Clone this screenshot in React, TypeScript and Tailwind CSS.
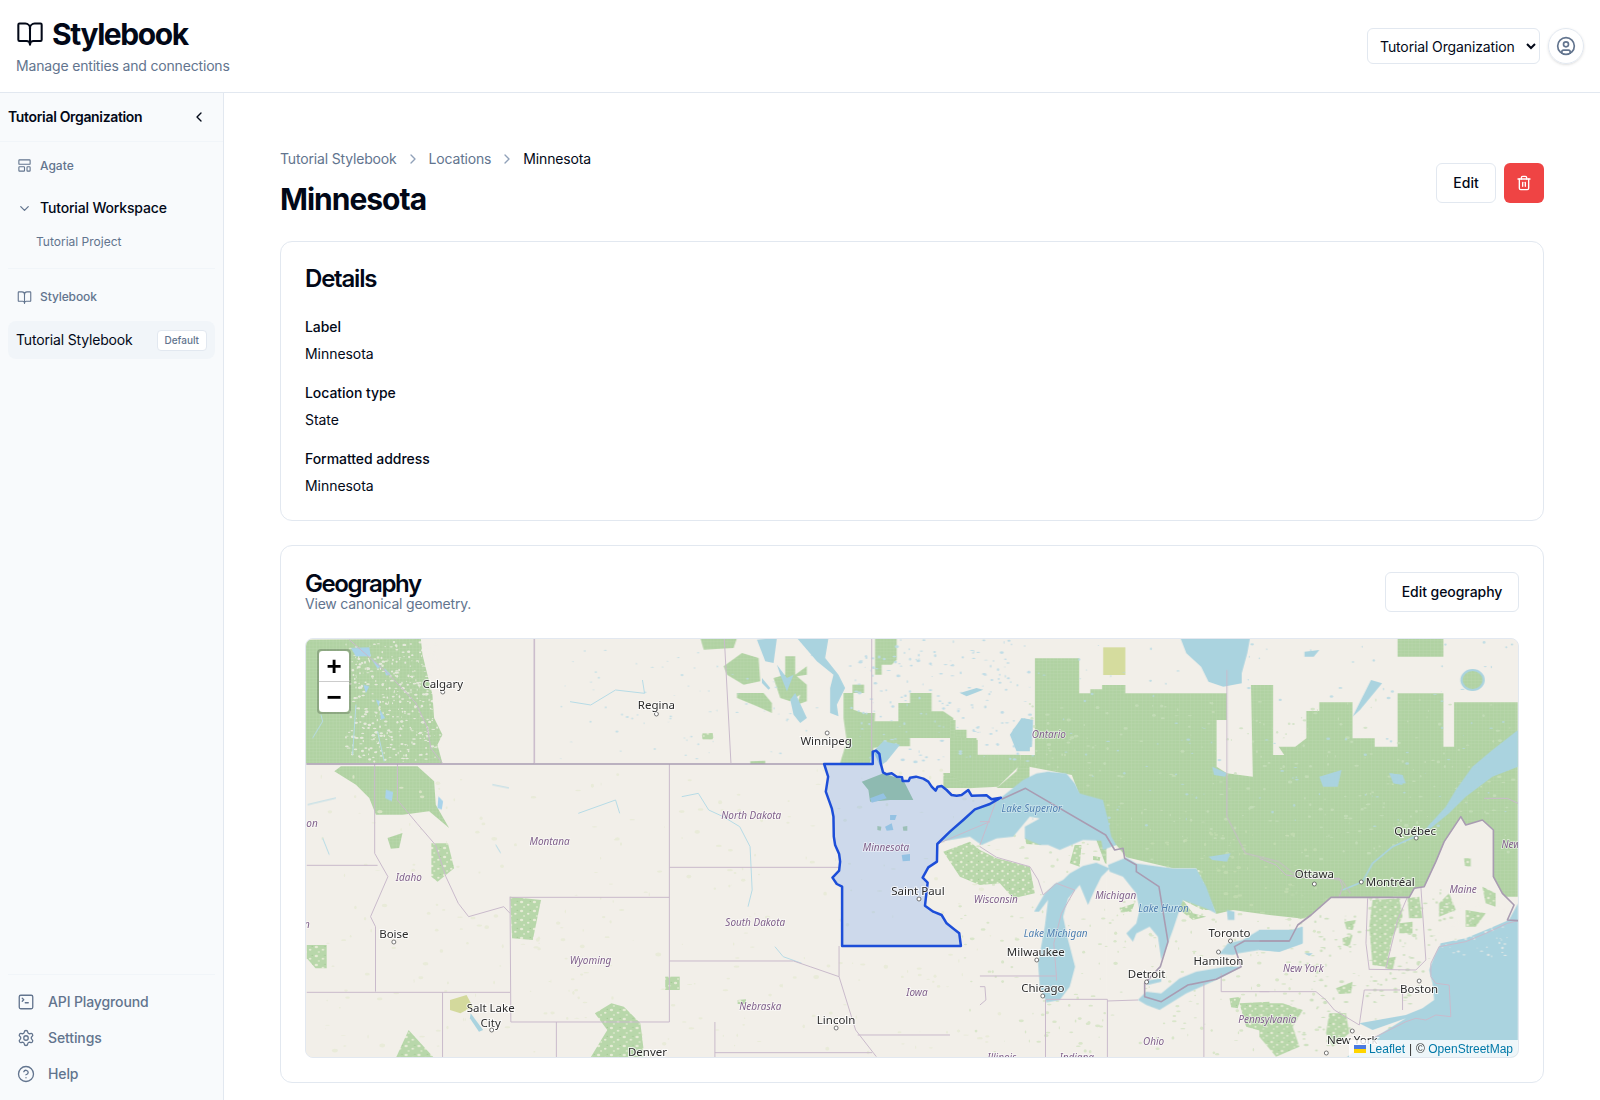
import {
  BookOpen,
  ChevronDown,
  ChevronLeft,
  ChevronRight,
  CircleHelp,
  CircleUser,
  LayoutTemplate,
  Settings,
  SquareTerminal,
  Trash2,
} from 'lucide-react'

const LAND = '#f2efe9'
const FOREST = 'url(#forest)'
const MOTTLE = 'url(#mottle)'
const WATER = '#aad3df'
const BORDER = '#c9bacb'
const STRONG = '#a99cb2'

// everything below is traced from crops of the map, so each list has its own origin

// rockies crop, origin 305,638, 3x
const rockiesForest = [
  '0,5 345,3 350,50 380,170 385,240 410,290 395,320 410,376 0,376',
  '85,400 105,385 335,385 385,430 390,500 430,570 370,520 290,530 210,530 190,480 150,440',
  '245,600 290,585 280,630 255,632',
]
const rockiesWater = [
  '135,30 190,28 195,55 150,55',
  '195,60 225,85 215,92',
  '235,90 255,110 240,112',
  '172,140 190,145 180,165',
  '210,185 222,190 218,205',
  '222,215 238,240 225,245',
  '240,455 262,462 258,490 238,480',
  '398,475 412,490 408,515 395,510',
]
const rockiesRivers = [
  '20,300 50,250 45,230',
  '140,350 150,200',
  '215,280 235,370',
  '5,500 90,480',
  '70,650 50,600',
  '560,440 610,450',
  '570,620 585,645',
]

// manitoba crop, origin 700,638, 3x
const manitobaForest = [
  '70,85 125,45 175,60 180,130 130,140 80,110',
  '110,165 190,165 215,195 215,225 170,205 110,180',
  '220,120 255,110 255,55 285,55 285,110 320,85 320,110 290,115 320,140 320,190 290,200 300,170 270,190 240,180',
  '0,0 110,0 100,30 10,35',
  '525,0 590,0 590,65 575,80 545,80 545,110 525,110',
  '457,140 492,140 492,165 457,165',
  '430,165 460,165 460,215 490,225 525,225 520,340 510,375 420,375 440,310 430,240',
  '515,250 595,250 595,195 630,195 630,165 695,165 695,220 730,220 760,240 760,275 800,275 800,300 830,300 830,350 960,350 960,380 830,380 800,330 765,330 765,300 630,300 630,325 570,325 515,330',
  '730,405 805,405 805,450 730,450',
  '960,365 990,365 990,450 890,450 950,400',
  '5,290 35,285 38,300 8,302',
  '150,370 195,368 195,378 150,378',
]
const manitobaWater = [
  '170,5 230,0 220,75 195,70',
  '290,0 385,0 375,60 415,110 435,150 410,200 415,235 390,225 390,150 400,110 350,70',
  '270,185 285,165 320,240 300,255 280,230',
  '185,120 210,150 205,155 185,135',
  '230,80 260,120 280,110 260,160 240,110',
  '520,340 550,310 600,320 560,370 540,385',
  '930,290 965,240 990,245 990,340 950,340',
  '780,165 830,150 850,155 800,175',
]

// north shore crop, stretched, origin 950,630
const northForest = [
  '230,85 350,85 350,190 380,190 380,178 412,178 412,165 475,165 475,190 750,190 750,270 722,270 722,410 750,430 820,440 815,165 875,165 875,375 905,375 890,350 935,350 965,325 965,243 1000,243 1000,217 1090,217 1090,325 1150,325 1150,350 1212,350 1212,190 1336,190 1336,350 1365,350 1365,217 1537,217 1537,800 1200,800 900,880 700,850 420,700 330,435 190,405 190,375 230,375',
  '1212,27 1336,27 1336,80 1212,80',
]
const northWater = [
  '625,27 812,27 805,70 790,130 790,160 740,170 700,155 680,110 640,70',
  '170,300 200,265 225,270 222,350 190,360',
  '1090,260 1140,150 1170,160 1110,240',
  '1190,430 1225,435 1225,465 1200,460',
  '710,410 750,430 745,440 715,435',
  '1000,440 1060,420 1050,470 1010,470',
  '960,65 1000,60 985,80 960,80',
  '700,680 760,670 750,695 710,690',
]

// great lakes crop, origin 980,770, 3x
const lakesLand = ['410,225 440,262 580,295 650,295 710,432 760,420 870,435 960,445 975,470 975,870 380,870 380,230']
const lakesForest = [
  '-110,245 -30,215 0,240 50,265 150,290 165,370 100,385 60,340 0,345 -60,320',
  '285,225 305,225 300,290 270,280',
  '135,205 175,200 185,225 140,222',
  '340,258 362,262 360,272 340,270',
  '420,415 465,400 455,425 425,425',
  '780,700 870,695 870,790 800,770',
  '750,685 785,680 775,715 755,712',
  '595,370 640,430 680,440 640,450 600,420',
  '440,290 660,300 700,420 670,420 610,390 570,330',
]
const lakesWater = [
  '63,83 130,30 170,10 205,5 260,10 285,40 300,70 370,90 385,150 395,200 410,225 370,240 365,212 310,210 240,240 205,225 180,225 135,205 135,170 180,145 150,140 100,200 50,205 5,225 -30,200 -120,215 -128,222 -90,185 -50,150 -15,118 30,102',
  '390,295 350,278 310,288 270,310 250,330 225,342 195,370 163,425 178,425 205,390 195,470 175,580 180,650 200,697 240,690 270,650 286,590 265,510 250,440 265,385 300,345 325,405 345,360 365,320',
  '385,285 440,262 470,280 580,295 650,295 680,350 710,430 680,415 610,390 600,420 580,480 565,520 545,570 535,500 510,470 470,490 460,515 440,490 470,460 480,420 470,370 430,320 390,305',
  '475,690 500,665 545,670 600,625 650,605 740,590 785,590 720,625 620,670 540,720 500,705',
  '500,632 545,625 545,635 505,645',
  '720,552 745,520 790,510 840,480 940,480 970,470 970,520 900,545 840,540 775,550 760,555',
  '742,420 765,425 765,450 745,450',
]
const lakesBorders = [
  '0,230 50,262 150,290 175,330 190,375',
  '190,375 230,340 285,360 245,430 222,520 230,620 230,632',
  '0,618 230,618',
  '197,690 197,870',
  '197,688 383,688 383,870',
  '383,693 475,690',
  '673,640 673,870',
  '725,610 725,665 870,665',
  '0,650 15,650 18,690 0,705',
  '50,88 35,130 0,225',
  '0,155 30,155',
  '-128,222 -30,180 30,155',
]
const lakesStrong = '65,88 137,55 378,195 405,240 430,235 435,265 470,285 470,305 538,350 565,515 542,590 495,640 495,680 545,695 625,645 710,628 785,590 765,530 795,513 930,513'

// new england crop, origin 1260,770, 3x
const coastLand =
  '0,513 90,513 115,465 155,435 215,382 450,382 465,355 495,350 530,275 555,215 605,140 620,165 670,150 703,180 703,320 730,370 765,405 777,420 777,870 0,870'
const coastForest = [
  '340,390 420,385 430,440 400,500 380,590 340,585 330,470',
  '445,385 480,380 490,445 450,445',
  '420,460 460,455 460,490 420,490',
  '380,565 410,560 400,600 380,595',
  '255,455 290,450 280,480 262,478',
  '250,505 280,495 270,530 252,525',
  '230,655 280,635 275,670 240,672',
  '0,700 70,700 130,720 100,770 120,830 50,860 0,800',
  '210,730 260,730 270,790 220,830 200,790',
  '540,400 570,370 590,420 540,440',
  '615,265 635,265 635,290 618,288',
  '670,350 710,370 710,410 680,400',
  '620,420 680,430 650,470 620,470',
]
const coastWater = [
  '777,400 750,450 680,480 620,505 545,520 525,560 510,600 520,640 525,690 490,715 440,735 300,760 340,780 440,745 350,800 250,870 777,870',
  '777,-120 700,-60 640,-10 590,60 560,110 510,165 490,190 515,175 570,130 620,80 700,20 777,-10',
  '390,10 430,15 440,40 410,42',
  '0,480 100,480 130,470 130,520 60,545 0,540',
  '135,550 160,550 150,558',
]
const coastBorders = [
  '0,265 50,285 80,315 150,325 240,325 250,350 240,380',
  '0,665 170,665 200,690 225,720 300,765',
  '330,600 320,520 325,385',
  '330,598 470,600 500,570 485,350',
  '380,595 415,450 445,380',
  '315,660 430,660 430,720',
  '315,660 300,765',
  '675,85 745,85 777,100',
  '777,452 745,460 680,490 620,515 540,530 515,580 515,620 530,640 570,645 575,740 530,735 500,750 470,745 440,755 380,785 330,810',
]
const coastStrong = '0,513 90,513 115,465 155,435 215,382 450,382 465,355 495,350 530,275 555,215 605,140 620,165 670,150 703,180 703,320 730,370 765,405 745,450 777,452'

// western states, stretched, origin 300,630
const westForest = [
  '315,640 355,640 370,715 330,755 315,740',
  '505,800 580,810 560,930 510,925',
  '710,1150 750,1120 780,1130 820,1180 830,1282 700,1282 740,1200',
  '1055,1110 1075,1108 1075,1122 1055,1122',
  '880,1040 915,1040 915,1080 880,1080',
  '14,945 62,945 62,1015 35,1015 14,985',
  '230,1282 260,1200 320,1282',
  '970,310 995,310 995,328 970,328',
]
const westRivers = [
  '920,500 960,490 985,540 1020,560 1060,590 1085,650 1090,780 1080,830',
  '670,550 760,510 770,550',
  '1145,950 1165,980 1210,1000',
  '825,150 830,190 760,180 700,225 650,215',
]
const westBorders = [
  '563,27 563,402',
  '178,402 178,670 210,740 168,860 180,890 180,1085',
  '233,402 233,510 280,580 325,645 350,740 380,820 405,860 490,830 505,850',
  '14,706 185,706',
  '505,802 890,802',
  '505,800 507,1176 890,1176',
  '890,402 890,1176',
  '890,712 1300,712',
  '890,993 1190,993 1230,1010 1300,1040 1340,1200 1390,1280',
  '1300,948 1300,1040',
  '14,1087 505,1087',
  '342,1087 342,1282',
  '617,1176 617,1282',
  '1000,1176 1000,1282',
  '1000,1268 1380,1268',
  '1345,1215 1568,1215',
]

const minnesota =
  '102,102 248,102 248,65 258,62 268,72 272,100 279,127 290,133 305,130 320,140 336,142 338,153 356,153 360,143 378,140 400,146 415,155 425,170 437,182 443,170 455,168 470,180 485,195 500,197 515,195 535,180 545,197 590,196 605,208 633,203 600,222 555,238 520,270 480,305 442,342 441,395 415,412 398,443 413,458 405,527 430,545 455,555 470,580 508,610 513,648 156,648 156,470 140,462 127,443 147,422 150,395 147,372 135,345 131,320 130,260 125,235 107,185 114,140 102,102'

const cities: [string, number, number][] = [
  ['Calgary', 442, 688],
  ['Regina', 656, 709],
  ['Winnipeg', 826, 745],
  ['Boise', 393, 938],
  ['Salt Lake', 490, 1012],
  ['City', 490, 1027],
  ['Denver', 647, 1056],
  ['Lincoln', 836, 1024],
  ['Saint Paul', 918, 895],
  ['Milwaukee', 1036, 956],
  ['Chicago', 1043, 992],
  ['Detroit', 1147, 978],
  ['Toronto', 1230, 937],
  ['Hamilton', 1219, 965],
  ['Ottawa', 1315, 878],
  ['Montréal', 1391, 886],
  ['Québec', 1416, 835],
  ['Boston', 1420, 993],
  ['New York', 1353, 1044],
]

const dots: [number, number][] = [
  [442, 692], [656, 714], [827, 733], [393, 942], [491, 1030], [836, 1028], [919, 899],
  [1037, 960], [1043, 996], [1147, 982], [1231, 941], [1219, 952], [1315, 884], [1362, 882],
  [1417, 838], [1420, 981], [1353, 1031], [1327, 1053],
]

const regions: [string, number, number][] = [
  ['Montana', 549, 845],
  ['North Dakota', 751, 819],
  ['South Dakota', 755, 926],
  ['Idaho', 408, 881],
  ['Wyoming', 590, 964],
  ['Nebraska', 760, 1010],
  ['Iowa', 917, 996],
  ['Minnesota', 886, 851],
  ['Wisconsin', 996, 903],
  ['Michigan', 1116, 899],
  ['Ontario', 1049, 738],
  ['Maine', 1464, 893],
  ['New York', 1304, 972],
  ['Pennsylvania', 1268, 1023],
  ['Ohio', 1154, 1045],
  ['on', 311, 827],
  ['n', 306, 928],
  ['New', 1512, 848],
  ['Illinois', 1002, 1061],
  ['Indiana', 1077, 1061],
]

const lakes: [string, number, number][] = [
  ['Lake Superior', 1032, 812],
  ['Lake Huron', 1164, 912],
  ['Lake Michigan', 1056, 937],
]

type Speck = { x: number; y: number; rx: number; ry: number }

// fixed seed so the map looks the same on every load
function specks(seed: number, n: number, x0: number, y0: number, x1: number, y1: number, size: number): Speck[] {
  let s = seed
  const next = () => {
    s = (s * 16807) % 2147483647
    return s / 2147483647
  }
  const out: Speck[] = []
  for (let i = 0; i < n; i++) {
    out.push({
      x: x0 + next() * (x1 - x0),
      y: y0 + next() * (y1 - y0),
      rx: 0.4 + next() * size,
      ry: 0.4 + next() * size * 0.6,
    })
  }
  return out
}

const rockyGaps = specks(11, 420, 345, 642, 440, 762, 1.6)
const forestGaps = specks(23, 320, 1030, 700, 1515, 860, 2)
const shieldLakes = specks(37, 190, 850, 640, 1030, 762, 1.8)
const quebecLakes = specks(41, 130, 1030, 640, 1515, 830, 1.6)
const prairieLakes = specks(53, 70, 560, 642, 820, 762, 1.2)
const plainsTint = specks(61, 300, 320, 770, 1000, 1055, 2.6)
const lakesTint = specks(71, 340, 960, 830, 1320, 1055, 2.2)
const coastTint = specks(83, 240, 1290, 890, 1460, 1055, 2.2)
const coastSpray = specks(97, 70, 1440, 900, 1510, 960, 1.4)

function Specks({ items, fill, opacity }: { items: Speck[]; fill: string; opacity: number }) {
  return (
    <g fill={fill} opacity={opacity}>
      {items.map((d, i) => (
        <ellipse key={i} cx={d.x} cy={d.y} rx={d.rx} ry={d.ry} />
      ))}
    </g>
  )
}

function Polys({ items, fill }: { items: string[]; fill: string }) {
  return (
    <>
      {items.map((p) => (
        <polygon key={p} points={p} fill={fill} />
      ))}
    </>
  )
}

function Lines({ items, stroke, width }: { items: string[]; stroke: string; width: number }) {
  return (
    <>
      {items.map((p) => (
        <polyline
          key={p}
          points={p}
          fill="none"
          stroke={stroke}
          strokeWidth={width}
          strokeLinejoin="round"
          vectorEffect="non-scaling-stroke"
        />
      ))}
    </>
  )
}

function MapView() {
  const crop = (x: number, y: number) => `translate(${x} ${y}) scale(0.33333)`
  const west = 'translate(300 630) scale(0.41457 0.33333)'
  const north = 'translate(950 630) scale(0.36995 0.33333)'

  return (
    <div className="relative h-[420px] overflow-hidden rounded-lg border border-slate-200 bg-[#f2efe9]">
      <svg viewBox="305 639 1214 418" preserveAspectRatio="none" className="block h-full w-full">
        <defs>
          <pattern id="forest" width="10" height="10" patternUnits="userSpaceOnUse">
            <rect width="10" height="10" fill="#b0d2a2" />
            <path d="M0 0H10M0 0V10" stroke="#c2dcb6" strokeWidth="1.6" />
          </pattern>
          <pattern id="mottle" width="31" height="27" patternUnits="userSpaceOnUse">
            <rect width="31" height="27" fill="#b8d7aa" />
            <circle cx="6" cy="6" r="4" fill="#e6ecd6" />
            <circle cx="22" cy="14" r="3" fill="#e6ecd6" />
            <circle cx="12" cy="21" r="2.5" fill="#e6ecd6" />
            <circle cx="27" cy="4" r="2" fill="#a4cb95" />
          </pattern>
          <filter id="soft" x="0" y="0" width="100%" height="100%">
            <feGaussianBlur stdDeviation="0.45" />
          </filter>
        </defs>
        <rect x="305" y="639" width="1214" height="418" fill={LAND} />

        <g filter="url(#soft)">
          {/* forest */}
          <g transform={crop(305, 638)}><Polys items={rockiesForest} fill={FOREST} /></g>
          <g transform={crop(700, 638)}><Polys items={manitobaForest} fill={FOREST} /></g>
          <g transform={north}>
            <Polys items={northForest} fill={FOREST} />
            <polygon points="0,270 15,270 15,320 75,330 75,375 190,375 190,405 130,470 50,475 0,430" fill={FOREST} />
          </g>
          <Specks items={rockyGaps} fill="#f2efe9" opacity={0.8} />
          <Specks items={forestGaps} fill="#c9e0bd" opacity={0.7} />

          {/* land south of the forest line */}
          <g transform={crop(980, 770)}><Polys items={lakesLand} fill={LAND} /></g>
          <g transform={crop(1260, 770)}><polygon points={coastLand} fill={LAND} /></g>
          <Specks items={plainsTint} fill="#e5ead2" opacity={0.7} />
          <Specks items={lakesTint} fill="#c9dfb6" opacity={0.6} />
          <Specks items={coastTint} fill="#bcd9ad" opacity={0.65} />
          <g transform={crop(980, 770)}><Polys items={lakesForest} fill={MOTTLE} /></g>
          <g transform={crop(1260, 770)}><Polys items={coastForest} fill={MOTTLE} /></g>
          <g transform={west}>
            <Polys items={westForest} fill={MOTTLE} />
            <Polys items={['360,1110 400,1095 415,1130 385,1150 360,1140']} fill="#d3d99c" />
            <Polys items={['410,1150 440,1200 430,1205 408,1165']} fill={WATER} />
          </g>
          <g transform={north}>
            <Polys items={['415,52 475,52 475,135 415,135']} fill="#d5dc9e" />
          </g>

          {/* water */}
          <Specks items={shieldLakes} fill="#bcdbe6" opacity={0.9} />
          <Specks items={quebecLakes} fill="#b6d9e3" opacity={0.8} />
          <Specks items={prairieLakes} fill="#bcdde6" opacity={0.8} />
          <g transform={crop(305, 638)}>
            <Polys items={rockiesWater} fill="#a9d3ea" />
            <Lines items={rockiesRivers} stroke="#b6dbe6" width={1} />
          </g>
          <g transform={crop(700, 638)}><Polys items={manitobaWater} fill={WATER} /></g>
          <g transform={north}>
            <Polys items={northWater} fill={WATER} />
            <circle cx="1415" cy="150" r="30" fill={FOREST} stroke={WATER} strokeWidth="6" />
          </g>
          <g transform={crop(980, 770)}><Polys items={lakesWater} fill={WATER} /></g>
          <g transform={crop(1260, 770)}>
            <Polys items={coastWater} fill={WATER} />
            <Lines items={['490,190 400,230 340,280 310,335 250,360']} stroke={WATER} width={1.6} />
          </g>
          <Specks items={coastSpray} fill={LAND} opacity={0.7} />

          {/* minnesota interior */}
          <g transform={crop(790, 730)}>
            <polygon points="215,155 280,130 340,150 370,210 300,210 240,215 235,180" fill="#a3c9a0" />
            <polygon points="240,205 280,190 290,205 245,218" fill={WATER} />
            <polygon points="285,290 305,280 310,300 290,302" fill={WATER} />
            <polygon points="300,255 320,255 315,270 300,270" fill={WATER} />
            <polygon points="335,375 360,372 360,392 338,394" fill={WATER} />
            <polygon points="262,288 274,290 272,302 262,300" fill="#b4d0a8" />
            <polygon points="338,290 352,288 352,302 340,302" fill="#b4d0a8" />
          </g>
        </g>

        {/* borders */}
        <g transform={west}>
          <Lines items={westRivers} stroke="#b6dbe6" width={1} />
          <Lines items={westBorders} stroke={BORDER} width={1} />
          <Lines items={['13,402 1265,402']} stroke={STRONG} width={1.6} />
        </g>
        <g transform={crop(700, 638)}>
          <Lines items={['72,0 92,376', '515,0 515,340']} stroke={BORDER} width={1} />
        </g>
        <g transform={crop(305, 638)}>
          <Lines items={['130,5 250,110 330,195 365,270 375,330 410,376', '687,0 687,376']} stroke={BORDER} width={1} />
        </g>
        <g transform={north}>
          <Lines items={['750,120 750,560 800,670 890,695 930,730 1060,750 1085,790']} stroke={BORDER} width={1} />
        </g>
        <g transform={crop(980, 770)}>
          <Lines items={lakesBorders} stroke={BORDER} width={1} />
          <Lines items={[lakesStrong]} stroke={STRONG} width={1.6} />
        </g>
        <g transform={crop(1260, 770)}>
          <Lines items={coastBorders} stroke={BORDER} width={1} />
          <Lines items={[coastStrong]} stroke={STRONG} width={1.6} />
        </g>

        {/* minnesota outline */}
        <g transform={crop(790, 730)}>
          <polygon
            points={minnesota}
            fill="#3b82f6"
            fillOpacity="0.2"
            stroke="#1d4ed8"
            strokeWidth="7.5"
            strokeLinejoin="round"
          />
        </g>

        {dots.map(([x, y]) => (
          <circle key={`${x}-${y}`} cx={x} cy={y} r="2" fill="#fff" stroke="#555" strokeWidth="0.8" />
        ))}
        <g fontFamily="'Noto Sans', sans-serif" fontSize="11.5" textAnchor="middle" fill="#2b2b2b">
          {cities.map(([t, x, y]) => (
            <text key={t} x={x} y={y} stroke="#fff" strokeWidth="2" strokeOpacity="0.75" paintOrder="stroke">
              {t}
            </text>
          ))}
        </g>
        <g fontFamily="'Noto Sans', sans-serif" fontSize="10" fontStyle="italic" textAnchor="middle" fill="#7f5f8a">
          {regions.map(([t, x, y]) => (
            <text key={t + x} x={x} y={y} stroke="#fff" strokeWidth="1.5" strokeOpacity="0.6" paintOrder="stroke">
              {t}
            </text>
          ))}
        </g>
        <g fontFamily="'Noto Sans', sans-serif" fontSize="10" fontStyle="italic" textAnchor="middle" fill="#4f7fb0">
          {lakes.map(([t, x, y]) => (
            <text key={t} x={x} y={y} stroke="#fff" strokeWidth="1.5" strokeOpacity="0.4" paintOrder="stroke">
              {t}
            </text>
          ))}
        </g>
      </svg>

      <div className="absolute left-[11px] top-[10px] w-[34px] rounded border-2 border-black/20 bg-clip-padding">
        <div className="flex h-[31px] items-center justify-center rounded-t-sm border-b border-[#ccc] bg-white text-[26px] font-bold leading-none text-black [font-family:'Liberation_Sans',sans-serif]">
          +
        </div>
        <div className="flex h-[30px] items-center justify-center rounded-b-sm bg-white text-[26px] font-bold leading-none text-black [font-family:'Liberation_Sans',sans-serif]">
          −
        </div>
      </div>

      <div className="absolute bottom-0 right-0 flex h-[17px] items-center bg-white/80 px-[5px] text-xs leading-none text-[#333] [font-family:'Liberation_Sans',sans-serif]">
        <svg viewBox="0 0 12 8" className="mr-[3px] h-2 w-3">
          <rect width="12" height="4" fill="#4C7BE1" />
          <rect y="4" width="12" height="4" fill="#FFD500" />
        </svg>
        <span className="text-[#0078a8]">Leaflet</span>
        <span className="mx-1">|</span>
        <span>©&nbsp;</span>
        <span className="text-[#0078a8]">OpenStreetMap</span>
      </div>
    </div>
  )
}

function Field({ label, value }: { label: string; value: string }) {
  return (
    <div className="flex flex-col gap-[7px] tracking-[-0.05px]">
      <div className="text-sm font-medium leading-5 text-[#020817]">{label}</div>
      <div className="text-sm leading-5 text-[#020817]">{value}</div>
    </div>
  )
}

function Sidebar() {
  return (
    <aside className="flex w-[224px] shrink-0 flex-col border-r border-slate-200 bg-[#f8fafc]">
      <div className="flex h-[49px] shrink-0 items-center justify-between border-b border-slate-100 pl-2 pr-4">
        <span className="text-sm font-semibold tracking-[-0.34px] text-[#020817]">Tutorial Organization</span>
        <ChevronLeft className="h-4 w-4 text-[#020817]" />
      </div>

      <div className="flex-1 px-2">
        <div className="flex h-[47px] items-center gap-2 pl-[9px]">
          <LayoutTemplate className="h-[15px] w-[15px] text-slate-500" strokeWidth={1.75} />
          <span className="text-xs font-medium text-slate-500">Agate</span>
        </div>
        <div className="flex h-[38px] items-center gap-2 pl-[9px]">
          <ChevronDown className="h-[15px] w-[15px] text-slate-500" />
          <span className="text-sm font-medium tracking-[-0.17px] text-[#020817]">Tutorial Workspace</span>
        </div>
        <div className="flex h-[30px] items-center pl-7 text-xs text-slate-500">Tutorial Project</div>
        <div className="mt-[11px] border-t border-slate-100" />
        <div className="flex h-[56px] items-center gap-2 pl-[9px]">
          <BookOpen className="h-[15px] w-[15px] text-slate-500" strokeWidth={1.75} />
          <span className="text-xs font-medium tracking-[-0.1px] text-slate-500">Stylebook</span>
        </div>
        <div className="-mt-[4px] flex h-[38px] items-center justify-between rounded-lg bg-slate-100 pl-2 pr-2">
          <span className="text-sm tracking-[-0.17px] text-[#020817]">Tutorial Stylebook</span>
          <span className="flex h-[21px] items-center rounded border border-slate-200 bg-white px-[7px] text-[10px] font-medium text-slate-500">
            Default
          </span>
        </div>
      </div>

      <div className="mx-2 border-t border-slate-100 pb-[8px] pt-[9px]">
        {[
          { label: 'API Playground', Icon: SquareTerminal },
          { label: 'Settings', Icon: Settings },
          { label: 'Help', Icon: CircleHelp },
        ].map(({ label, Icon }) => (
          <div key={label} className="flex h-9 items-center gap-[13px] pl-[9px]">
            <Icon className="h-[18px] w-[18px] text-slate-500" strokeWidth={1.75} />
            <span className="text-sm font-medium tracking-[-0.12px] text-slate-500">{label}</span>
          </div>
        ))}
      </div>
    </aside>
  )
}

export default function App() {
  return (
    <div className="flex h-screen flex-col overflow-hidden bg-white text-[#020817] [font-family:Inter,sans-serif]">
      <header className="flex h-[93px] shrink-0 items-center justify-between border-b border-slate-200 pl-4 pr-4">
        <div>
          <div className="flex items-center gap-2">
            <BookOpen className="h-7 w-7" strokeWidth={1.75} />
            <h1 className="text-3xl font-bold tracking-[-1.43px]">Stylebook</h1>
          </div>
          <p className="mt-1 text-sm tracking-[-0.17px] text-slate-500">Manage entities and connections</p>
        </div>
        <div className="flex items-center gap-2">
          <select className="h-9 w-[173px] rounded-md border border-slate-200 bg-white px-2 text-sm tracking-[-0.12px] text-[#020817]">
            <option>Tutorial Organization</option>
          </select>
          <div className="flex h-9 w-9 items-center justify-center rounded-full border border-slate-200 shadow-sm">
            <CircleUser className="h-5 w-5 text-slate-500" />
          </div>
        </div>
      </header>

      <div className="flex min-h-0 flex-1">
        <Sidebar />
        <main className="min-w-0 flex-1 pl-14 pr-14 pt-[56px]">
          <div className="flex items-start justify-between">
            <div>
              <nav className="flex items-center gap-2 text-sm leading-5 tracking-[-0.17px]">
                <span className="text-slate-500">Tutorial Stylebook</span>
                <ChevronRight className="h-4 w-4 text-slate-400" />
                <span className="text-slate-500">Locations</span>
                <ChevronRight className="h-4 w-4 text-slate-400" />
                <span className="text-[#020817]">Minnesota</span>
              </nav>
              <h2 className="mt-3 text-3xl font-bold tracking-[-1px]">Minnesota</h2>
            </div>
            <div className="mt-[14px] flex gap-2">
              <button className="h-10 w-[60px] rounded-md border border-slate-200 bg-white text-sm font-medium">
                Edit
              </button>
              <button className="flex h-10 w-10 items-center justify-center rounded-md bg-[#ef4444] text-white">
                <Trash2 className="h-4 w-4" />
              </button>
            </div>
          </div>

          <section className="mt-[24px] rounded-xl border border-slate-200 bg-white px-6 pb-[24px] pt-[21px]">
            <h3 className="text-2xl font-semibold tracking-[-1.2px]">Details</h3>
            <div className="mt-[22px] flex flex-col gap-[19px]">
              <Field label="Label" value="Minnesota" />
              <Field label="Location type" value="State" />
              <Field label="Formatted address" value="Minnesota" />
            </div>
          </section>

          <section className="mt-[24px] rounded-xl border border-slate-200 bg-white px-6 pb-6 pt-[26px]">
            <div className="flex items-start justify-between">
              <div>
                <h3 className="text-2xl font-semibold leading-6 tracking-[-1.4px]">Geography</h3>
                <p className="-mt-[2px] text-sm tracking-[-0.2px] text-slate-500">View canonical geometry.</p>
              </div>
              <button className="h-10 w-[134px] rounded-md border border-slate-200 bg-white text-sm font-medium tracking-[-0.05px]">
                Edit geography
              </button>
            </div>
            <div className="mt-[24px]">
              <MapView />
            </div>
          </section>
        </main>
      </div>
    </div>
  )
}
